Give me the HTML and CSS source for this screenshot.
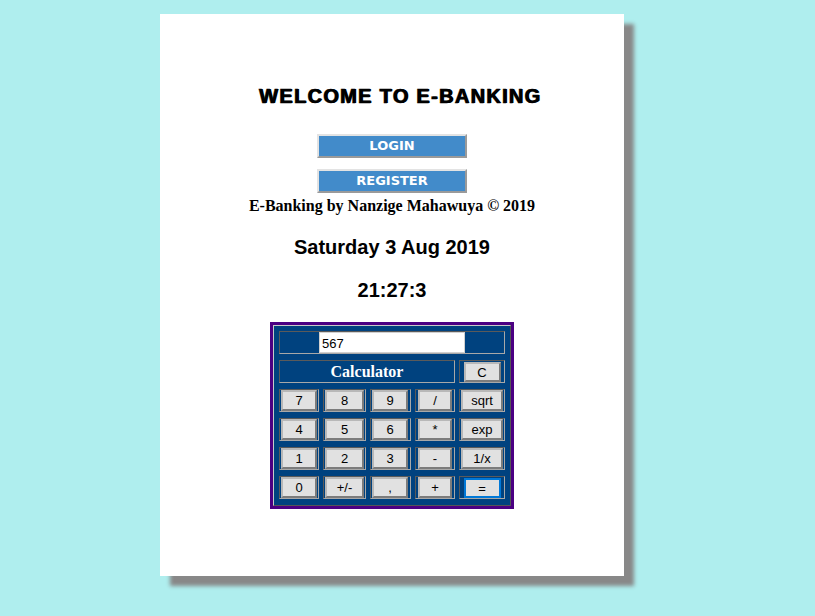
FILE: index.html
```html
<!DOCTYPE html>
<html>
<head>
<meta charset="utf-8">
<title>E-Banking</title>
<link rel="stylesheet" href="styles.css">
</head>
<body>
<div class="card">
  <h1 class="title">WELCOME TO E-BANKING</h1>
  <button class="nav-btn login">LOGIN</button>
  <button class="nav-btn register">REGISTER</button>
  <p class="credit">E-Banking by Nanzige Mahawuya © 2019</p>
  <p class="date">Saturday 3 Aug 2019</p>
  <p class="time">21:27:3</p>
  <div class="calc">
    <div class="calc-grid">
      <div class="cell span5"><input class="display" type="text" value="567"></div>
      <div class="cell span4 label">Calculator</div>
      <div class="cell"><button class="key narrow">C</button></div>

      <div class="cell"><button class="key">7</button></div>
      <div class="cell"><button class="key">8</button></div>
      <div class="cell"><button class="key c3">9</button></div>
      <div class="cell"><button class="key c4">/</button></div>
      <div class="cell"><button class="key">sqrt</button></div>

      <div class="cell"><button class="key">4</button></div>
      <div class="cell"><button class="key">5</button></div>
      <div class="cell"><button class="key c3">6</button></div>
      <div class="cell"><button class="key c4">*</button></div>
      <div class="cell"><button class="key">exp</button></div>

      <div class="cell"><button class="key">1</button></div>
      <div class="cell"><button class="key">2</button></div>
      <div class="cell"><button class="key c3">3</button></div>
      <div class="cell"><button class="key c4">-</button></div>
      <div class="cell"><button class="key">1/x</button></div>

      <div class="cell"><button class="key">0</button></div>
      <div class="cell"><button class="key">+/-</button></div>
      <div class="cell"><button class="key c3">,</button></div>
      <div class="cell"><button class="key c4">+</button></div>
      <div class="cell"><button class="key narrow focus">=</button></div>
    </div>
  </div>
</div>
</body>
</html>
```

FILE: styles.css
```css
html, body {
  margin: 0;
  padding: 0;
}
body {
  background: #afeeee;
  padding: 14px 0 0 160px;
  min-height: 616px;
  box-sizing: border-box;
  font-family: "Liberation Sans", Arial, sans-serif;
}
.card {
  width: 464px;
  height: 562px;
  box-sizing: border-box;
  background: #fff;
  box-shadow: 10px 10px 4px #888;
  padding-top: 70px;
  text-align: center;
}
.title {
  margin: 0;
  padding-left: 16px;
  font: 700 20px/24px "Liberation Sans", Arial, sans-serif;
  letter-spacing: 1.3px;
  text-shadow: 1px 0 0 #000;
  -webkit-text-stroke: 0.3px #000;
  color: #000;
}
.nav-btn {
  display: block;
  width: 150px;
  height: 24px;
  margin: 26px auto 0;
  padding: 0;
  background: #428bca;
  border: 2px solid;
  border-color: #e3e3e3 #9a9a9a #9a9a9a #e3e3e3;
  color: #fff;
  font: 700 13px/18px "DejaVu Sans", Verdana, sans-serif;
}
.register {
  margin-top: 11px;
}
.credit {
  margin: 4px 0 0;
  font: 700 16px/18px "Liberation Serif", "Times New Roman", serif;
  color: #000;
}
.date, .time {
  margin: 20px 0 0;
  font: 700 20px/24px "Liberation Sans", Arial, sans-serif;
  color: #000;
}
.time {
  margin-top: 19px;
}
.calc {
  width: 244px;
  box-sizing: border-box;
  margin: 20px auto 0;
  border: 3px solid #4b0082;
}
.calc-grid {
  display: grid;
  grid-template-columns: 40px 43px 41px 40px 46px;
  grid-auto-rows: 23px;
  column-gap: 4px;
  row-gap: 6px;
  padding: 5px 5px 6px 5px;
  background: #00427f;
  border: 1px solid;
  border-color: #c8c8c8 #555 #555 #c8c8c8;
}
.cell {
  box-sizing: border-box;
  border: 1px solid;
  border-color: #5a5a5a #a8a8a8 #a8a8a8 #5a5a5a;
  display: flex;
  align-items: center;
  justify-content: center;
  padding: 0 1px;
}
.span5 { grid-column: span 5; }
.span4 { grid-column: span 4; }
.label {
  color: #fff;
  font: 700 16px/20px "Liberation Serif", "Times New Roman", serif;
}
.display {
  width: 146px;
  height: 21px;
  box-sizing: border-box;
  border: 1px solid #d0d0d0;
  background: #fff;
  padding: 1px 2px 0;
  margin: 0;
  font: 13px "Liberation Sans", Arial, sans-serif;
  color: #000;
  outline: none;
}
.key {
  width: 100%;
  height: 21px;
  box-sizing: border-box;
  margin: 0;
  padding: 0;
  background: #e1e1e1;
  border: 2px solid;
  border-color: #b8b8b8 #7c7c7c #7c7c7c #b8b8b8;
  font: 13px/17px "Liberation Sans", Arial, sans-serif;
  color: #000;
}
.key.c3 {
  width: 36px;
  margin-right: auto;
}
.key.c4 {
  width: 34px;
}
.key.narrow {
  width: 37px;
  height: 20px;
}
.key.focus {
  border: 2px solid #0078d7;
  box-shadow: inset 0 0 0 1px #e1e1e1;
  background: #e1e1e1;
}
```
